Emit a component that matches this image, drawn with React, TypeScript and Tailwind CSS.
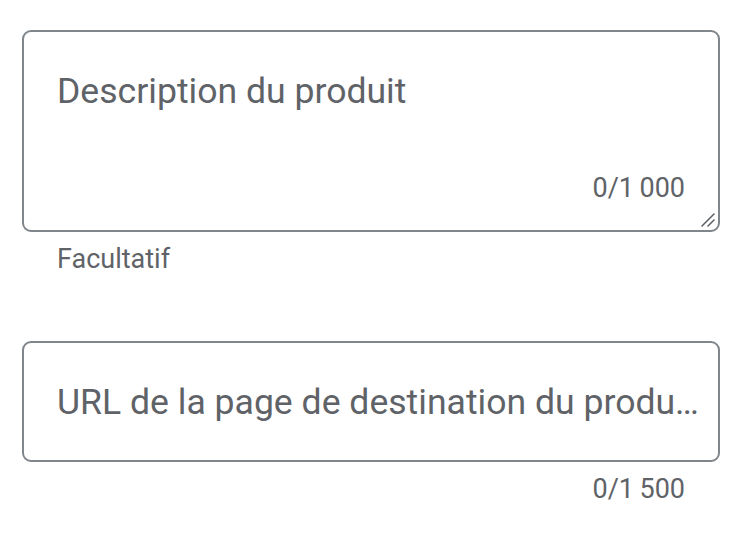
import React from 'react';

// Outlined text fields, Material style (scaled)
function ResizeGrip() {
  return (
    <svg
      className="absolute right-[3px] bottom-[3px]"
      width="14"
      height="14"
      viewBox="0 0 14 14"
      fill="none"
    >
      <path d="M13 1 L1 13" stroke="#5f6368" strokeWidth="1.6" strokeLinecap="round" />
      <path d="M13 7 L7 13" stroke="#5f6368" strokeWidth="1.6" strokeLinecap="round" />
    </svg>
  );
}

export default function App() {
  return (
    <div
      className="w-[750px] h-[546px] bg-white pt-[30px] pl-[22px]"
      style={{ fontFamily: 'Roboto, "Noto Sans", sans-serif' }}
    >
      <div className="w-[698px]">
        {/* Description */}
        <div className="relative h-[202px] border-2 border-[#80868b] rounded-[9px] flex flex-col justify-between pt-[37px] pb-[26px] pl-[33px] pr-[33px]">
          <div className="text-[35.6px] leading-[44px] text-[#5f6368]">Description du produit</div>
          <div className="self-end text-[27px] leading-[32px] text-[#5f6368]">0/1&#8201;000</div>
          <ResizeGrip />
        </div>
        <div className="mt-[11px] pl-[35px] text-[27px] leading-[32px] text-[#5f6368]">
          Facultatif
        </div>

        {/* URL */}
        <div className="mt-[66px] h-[121px] border-2 border-[#80868b] rounded-[9px] flex items-center pl-[33px] pr-[16px]">
          <div className="w-full whitespace-nowrap overflow-hidden text-[35.6px] leading-[44px] text-[#5f6368]">
            URL de la page de destination du produ…
          </div>
        </div>
        <div className="mt-[11px] pr-[35px] flex justify-end text-[27px] leading-[32px] text-[#5f6368]">
          0/1&#8201;500
        </div>
      </div>
    </div>
  );
}
